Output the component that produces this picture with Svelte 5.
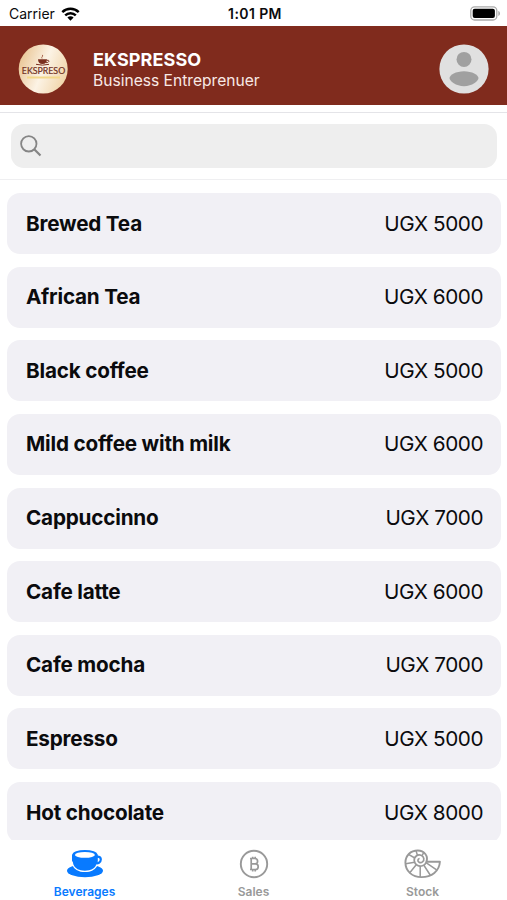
<script lang="ts">
	type Beverage = { name: string; price: number };

	const beverages: Beverage[] = [
		{ name: 'Brewed Tea', price: 5000 },
		{ name: 'African Tea', price: 6000 },
		{ name: 'Black coffee', price: 5000 },
		{ name: 'Mild coffee with milk', price: 6000 },
		{ name: 'Cappuccinno', price: 7000 },
		{ name: 'Cafe latte', price: 6000 },
		{ name: 'Cafe mocha', price: 7000 },
		{ name: 'Espresso', price: 5000 },
		{ name: 'Hot chocolate', price: 8000 }
	];

	let query = $state('');
	let activeTab = $state('Beverages');

	const filtered = $derived(
		beverages.filter((b) => b.name.toLowerCase().includes(query.toLowerCase()))
	);
</script>

{#snippet cupIcon()}
	<svg width="38" height="30" viewBox="0 0 38 30">
		<ellipse cx="19" cy="21.8" rx="18" ry="6.4" fill="currentColor" />
		<path
			d="M29.5 8.6c2-1.6 5.3-1 5.3 2 0 2.9-2.8 4.3-6.2 4"
			fill="none"
			stroke="currentColor"
			stroke-width="2.2"
		/>
		<path d="M6 5.5v5.5c0 5.4 3.5 10 9 11h8.5c5-1 8.3-5 8.3-11V5.5z" fill="currentColor" />
		<path
			d="M6 12.5c.6 4.8 3.8 8.500 8.700 9.500 2.700.5 5.700.5 8.400 0 4-.8 6.700-3.200 8-6.500"
			fill="none"
			stroke="#fff"
			stroke-width="1.3"
		/>
		<ellipse cx="18.9" cy="5.8" rx="12.5" ry="4.9" fill="currentColor" />
		<ellipse cx="18.9" cy="5.9" rx="10" ry="2.9" fill="#fff" />
	</svg>
{/snippet}

{#snippet coinIcon()}
	<svg width="30" height="30" viewBox="0 0 30 30" fill="none" stroke="currentColor">
		<circle cx="15" cy="15" r="13.2" stroke-width="1.9" />
		<path
			d="M12.2 9.500v11M11 9.500h4.900a2.700 2.700 0 0 1 0 5.400h-3.700h4.200a2.800 2.800 0 0 1 0 5.600H11M13.700 7.700v1.800M16.200 7.700v1.800M13.700 20.500v1.900M16.200 20.500v1.900"
			stroke-width="1.7"
		/>
	</svg>
{/snippet}

{#snippet shellIcon()}
	<svg width="38" height="30" viewBox="0 0 38 30" fill="none" stroke="currentColor">
		<path
			d="M22.6 12.8C20.8 16.8 16.500 18.100 13.200 16.200 9.600 14.100 9.200 9.300 12.300 7c2.900-2.100 7-.8 7.500 2.500.5 3-2.500 4.900-4.700 3.700-1.800-1-1.500-3.400.5-3.700"
			stroke-width="1.7"
		/>
		<path
			d="M22.4 12.8C24.5 7 20.3 1.5 13.8 1.5 6.4 1.5 1.4 6.7 1.4 13.6c0 8.7 7 14.5 16 14.5 10.3 0 18-6 18.5-15.3z"
			stroke-width="1.9"
			stroke-linejoin="round"
		/>
		<path
			d="M13.5 6.500 12 1.600M10.800 9 4.500 5.400M10.600 13.300 1.600 14.800M12.200 15.800 6 23.500M16.200 17v11M19.700 16l6.800 10.500M22 13.600l10.600 7.200M18 6.700l2-3.500"
			stroke-width="1.5"
		/>
	</svg>
{/snippet}

{#snippet tab(label: string, icon: typeof cupIcon)}
	<button class="tab" class:active={activeTab === label} onclick={() => (activeTab = label)}>
		{@render icon()}
		<span>{label}</span>
	</button>
{/snippet}

<div class="screen">
	<div class="status">
		<div class="carrier">
			<span>Carrier</span>
			<svg width="19" height="14" viewBox="0 0 18 14" fill="none" stroke="#000" stroke-width="2.4">
				<path d="M.8 5.200a11.600 11.600 0 0 1 16.400 0M3.700 8.400a7.500 7.500 0 0 1 10.600 0" />
				<path d="M9 13.700 5.900 10.600a4.400 4.400 0 0 1 6.200 0z" fill="#000" stroke="none" />
			</svg>
		</div>
		<span class="time">1:01 PM</span>
		<svg class="battery" width="31" height="15" viewBox="0 0 31 15">
			<rect x=".8" y=".8" width="26" height="13.2" rx="3.8" fill="#fff" stroke="#aaa" stroke-width="1.3" />
			<rect x="2.7" y="2.7" width="22.2" height="9.4" rx="2" />
			<path d="M28.3 5c2.300.6 2.300 4.300 0 4.900z" fill="#aaa" />
		</svg>
	</div>

	<header>
		<svg class="logo" width="50" height="50" viewBox="0 0 50 50">
			<defs>
				<linearGradient id="cream" x1="0" y1=".3" x2="1" y2=".7">
					<stop offset="0" stop-color="#e9c594" />
					<stop offset=".5" stop-color="#fcf3e5" />
					<stop offset="1" stop-color="#f0d3a6" />
				</linearGradient>
			</defs>
			<circle cx="25.2" cy="25" r="24.5" fill="url(#cream)" />
			<path d="M20 15.300h9c0 3-1.500 4.700-4.500 4.700S20 18.300 20 15.300z" fill="#7b3020" />
			<path d="M29 16.300c3-.6 2.500 2.500-1.200 2.400M18 20.300q6.500 1.700 13 0" fill="none" stroke="#7b3020" />
			<path d="M24 14.500c-1.200-1.500 1.600-1.800.4-3.600" fill="none" stroke="#aa6850" />
			<text x="25.5" y="30" text-anchor="middle">EKSPRESO</text>
			<path d="M9 33.500h33" stroke="#f3d88a" stroke-width="2" />
		</svg>
		<div class="owner">
			<h1>EKSPRESSO</h1>
			<p>Business Entreprenuer</p>
		</div>
		<svg class="avatar" width="50" height="50" viewBox="0 0 50 50">
			<circle cx="25" cy="25" r="24.6" fill="#e0e0e0" />
			<circle cx="25" cy="15.4" r="7.5" fill="#a0a0a0" />
			<path d="M10.5 34c0-3 6.500-6.800 14.500-6.800S39.500 31 39.500 34 33 42.200 25 42.200 10.500 37 10.500 34z" fill="#a0a0a0" />
		</svg>
	</header>

	<div class="search">
		<label>
			<svg width="22" height="22" viewBox="0 0 22 22" fill="none" stroke="#858585">
				<circle cx="8.8" cy="8.8" r="7.7" stroke-width="1.8" />
				<path d="m14.200 14.200 6.300 6.300" stroke-width="2.2" />
			</svg>
			<input bind:value={query} aria-label="Search beverages" />
		</label>
	</div>

	<ul>
		{#each filtered as beverage}
			<li>
				<span class="name">{beverage.name}</span>
				<span class="price">UGX {beverage.price}</span>
			</li>
		{/each}
	</ul>

	<nav>
		{@render tab('Beverages', cupIcon)}
		{@render tab('Sales', coinIcon)}
		{@render tab('Stock', shellIcon)}
	</nav>
</div>

<style>
	:global(body) {
		background: #fff;
	}

	.screen {
		display: flex;
		flex-direction: column;
		height: 900px;
		overflow: hidden;
		font-family: Inter, Roboto, sans-serif;
		color: #0b0b0d;
	}

	.status {
		display: grid;
		grid-template-columns: 1fr auto 1fr;
		align-items: center;
		flex: none;
		height: 26px;
		padding: 0 6px 0 9px;
		box-sizing: border-box;
		font-size: 14px;
	}

	.carrier {
		display: flex;
		align-items: center;
		gap: 6px;
		padding-top: 1px;
	}

	.time {
		padding-top: 1px;
		font-weight: 600;
		letter-spacing: 0.4px;
	}

	.battery {
		justify-self: end;
	}

	header {
		display: flex;
		align-items: center;
		flex: none;
		height: 79px;
		padding: 6px 18px 0;
		box-sizing: border-box;
		background: #802b1d;
		color: #fff;
	}

	.logo text {
		font-family: Lato, sans-serif;
		font-size: 8.8px;
		fill: #70301f;
		stroke: #70301f;
		stroke-width: 0.2px;
	}

	.owner {
		flex: 1;
		padding: 3px 0 0 25px;
	}

	h1 {
		margin: 0;
		font-size: 18px;
		font-weight: 700;
		line-height: 20px;
		letter-spacing: 0.1px;
	}

	p {
		margin: 0;
		font-size: 15.6px;
		line-height: 21px;
		color: #f8e9e5;
	}

	.search {
		flex: none;
		height: 68px;
		margin-top: 7px;
		padding: 11px 10px 0 11px;
		box-sizing: border-box;
		border-top: 1px solid #e4e4e8;
		border-bottom: 1px solid #efeff1;
	}

	label {
		display: flex;
		align-items: center;
		height: 44px;
		padding-left: 9px;
		border-radius: 13px;
		background: #eee;
	}

	input {
		flex: 1;
		margin-left: 8px;
		border: 0;
		outline: 0;
		background: none;
		font: inherit;
		font-size: 18px;
	}

	ul {
		display: flex;
		flex-direction: column;
		flex: 1;
		gap: 12.65px;
		min-height: 0;
		margin: 0;
		padding: 13px 6px 0 7px;
		overflow: hidden;
		list-style: none;
	}

	li {
		display: flex;
		align-items: center;
		justify-content: space-between;
		flex: none;
		height: 61px;
		padding: 0 18px 1px 19px;
		box-sizing: border-box;
		border-radius: 13px;
		background: #f1f0f5;
		font-size: 20.7px;
	}

	.name {
		font-weight: 700;
		letter-spacing: -0.2px;
	}

	.price {
		letter-spacing: -0.45px;
	}

	nav {
		display: grid;
		grid-template-columns: repeat(3, 1fr);
		flex: none;
		height: 60px;
		background: #fff;
	}

	.tab {
		display: flex;
		flex-direction: column;
		align-items: center;
		gap: 4px;
		padding: 9px 0 0;
		border: 0;
		background: none;
		color: #999;
		font-family: inherit;
		font-size: 12px;
		font-weight: 600;
		line-height: 18px;
	}

	.tab.active {
		color: #087aff;
	}
</style>
